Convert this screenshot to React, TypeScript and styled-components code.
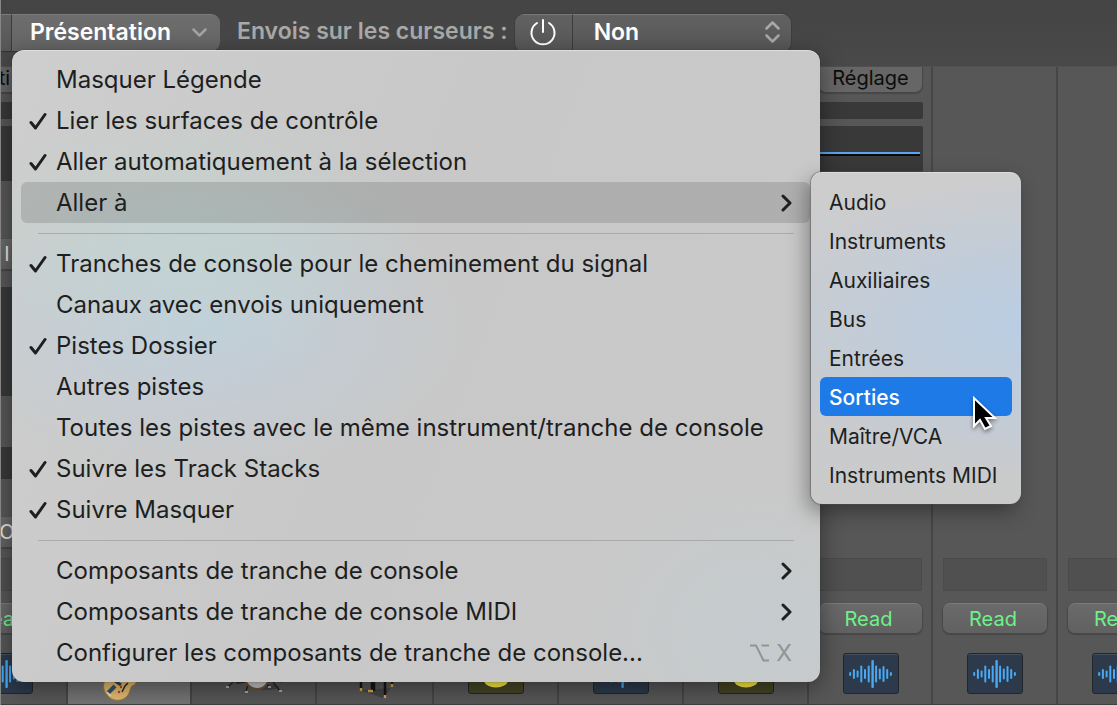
import React from "react";
import styled, { createGlobalStyle, css } from "styled-components";

const Global = createGlobalStyle`
  *, *::before, *::after { box-sizing: border-box; }
  body { margin: 0; background: #575757; font-family: Inter, "Liberation Sans", sans-serif; overflow: hidden; }
  button, select { font: inherit; margin: 0; border: 0; text-align: left; }
`;

const Page = styled.div`
  position: relative;
  display: flex;
  flex-direction: column;
  min-height: 100vh;
  overflow: hidden;
  border-left: 1px solid #868686;
`;

/* ---------- toolbar ---------- */

const Toolbar = styled.header`
  display: flex;
  align-items: flex-start;
  height: 66px;
  padding-top: 14px;
  background: linear-gradient(#444, #494949);
  color: #fff;
  font-size: 23px;
  font-weight: 600;
  line-height: 34px;
`;

const segment = css`
  height: 38px;
  padding: 0 0 2px;
  background: linear-gradient(#616161, #585858);
  border-top: 1px solid #7a7a7a;
  border-bottom: 1px solid #333;
  color: #fff;
`;

const EditSegment = styled.button`
  ${segment}
  width: 11px;
  border-right: 1px solid #3c3c3c;
`;

const ViewButton = styled.button`
  ${segment}
  display: flex;
  align-items: center;
  justify-content: space-between;
  width: 208px;
  padding: 0 13px 2px 18px;
  background: linear-gradient(#6d6d6d, #666);
  border-radius: 0 9px 9px 0;
`;

const SendsLabel = styled.label`
  padding: 0 7px 0 17px;
  color: #a9a9a9;
  white-space: nowrap;
`;

const SendsGroup = styled.div`
  display: flex;
  border-radius: 9px;
  box-shadow: 0 0 0 1px #3d3d3d;
  overflow: hidden;
`;

const PowerButton = styled.button`
  ${segment}
  display: flex;
  align-items: center;
  justify-content: center;
  width: 58px;
  border-right: 1px solid #3c3c3c;
`;

const SelectBox = styled.div`
  ${segment}
  display: flex;
  align-items: center;
  width: 218px;
  padding-right: 11px;
`;

const SendsSelect = styled.select`
  flex: 1;
  height: 34px;
  padding: 0 0 0 21px;
  appearance: none;
  background: transparent;
  color: #fff;
  outline: 0;
`;

/* ---------- mixer ---------- */

const Mixer = styled.main`
  display: flex;
  flex: 1;
  margin-left: -59px;
  border-top: 1px solid #525252;
  border-bottom: 1px solid #404040;
`;

const Strip = styled.section<{ $width?: number; $selected?: boolean }>`
  display: flex;
  flex: none;
  flex-direction: column;
  width: ${(p) => p.$width ?? 125}px;
  padding: 0 9px 0 10px;
  border-right: 2px solid #464646;
  background: ${(p) => (p.$selected ? "#747474" : "#575757")};
`;

const StripTop = styled.div`
  display: flex;
  flex-direction: column;
  height: 491px;
`;

const pill = css`
  width: 100%;
  padding: 0;
  background: linear-gradient(#6a6a6a, #616161);
  box-shadow: 0 1px 1px 1px #474747;
  font-size: 20px;
  text-align: center;
  white-space: nowrap;
`;

const SettingButton = styled.button`
  ${pill}
  height: 25px;
  padding-bottom: 3px;
  border-radius: 0 0 7px 7px;
  background: #666;
  color: #0c0c0c;
  line-height: 22px;
`;

const Well = styled.div<{ $h: number; $gap: number }>`
  flex: none;
  height: ${(p) => p.$h}px;
  margin: ${(p) => p.$gap}px -1px 0;
  border-radius: 2px;
  background: #393939;
`;

const EqCurve = styled.div`
  height: 2px;
  margin: 26px 3px 0 0;
  background: #5da5f2;
  box-shadow: 0 2px 0 #0a0a0a;
`;

const SlotButton = styled.button<{ $gap: number }>`
  ${pill}
  flex: none;
  height: 30px;
  margin-top: ${(p) => p.$gap}px;
  padding-left: 5px;
  color: #e6e6e6;
`;

const GroupSlot = styled.div`
  height: 33px;
  border: 1px solid #4b4b4b;
  background: #505050;
`;

const ReadButton = styled.button`
  ${pill}
  height: 30px;
  margin-top: 12px;
  padding-right: 4px;
  border-top: 1px solid #7b7b7b;
  border-radius: 7px;
  color: #6df289;
  line-height: 28px;
`;

const IconTile = styled.div<{ $tone: "blue" | "yellow" }>`
  display: flex;
  align-items: center;
  justify-content: center;
  align-self: center;
  width: 56px;
  height: 41px;
  margin-top: 20px;
  border: 1px solid #232629;
  border-radius: 3px;
  background: ${(p) => (p.$tone === "blue" ? "#2c3a4b" : "#454526")};
  box-shadow: inset 0 1px 0 #44515f;
`;

const Picture = styled.svg`
  align-self: center;
  flex: none;
  margin-top: 20px;
  overflow: visible;
`;

/* ---------- menus ---------- */

const Menu = styled.div`
  position: absolute;
  top: 50px;
  left: 11px;
  width: 808px;
  padding: 9px 10px 9px 9px;
  border-radius: 12px;
  background:
    radial-gradient(ellipse 230px 130px at 180px 190px, rgba(194, 214, 208, 0.7), transparent),
    radial-gradient(ellipse 260px 150px at 190px 275px, rgba(190, 208, 224, 0.8), transparent),
    radial-gradient(ellipse 160px 140px at 740px 580px, rgba(196, 204, 207, 0.9), transparent),
    linear-gradient(110deg, #cdcecd, #c8c8c8 45%, #c9c9c9);
  box-shadow: 0 0 1px #333, inset 0 1px 0 #dedede, 0 6px 24px rgba(0, 0, 0, 0.42);
  color: #1e1f1f;
  font-size: 24px;
`;

const MenuItem = styled.button<{ $open?: boolean }>`
  display: flex;
  align-items: center;
  width: 100%;
  height: 41px;
  padding: 0 18px 0 8px;
  border-radius: 6px;
  background: ${(p) => (p.$open ? "rgba(0, 0, 0, 0.13)" : "transparent")};
  color: inherit;
  white-space: nowrap;
`;

const CheckSlot = styled.span`
  display: flex;
  width: 27px;
`;

const ItemLabel = styled.span`
  flex: 1;
`;

const Shortcut = styled.kbd`
  display: flex;
  align-items: center;
  gap: 6px;
  color: #929494;
  font: inherit;
  font-size: 23px;
`;

const Separator = styled.hr`
  height: 1px;
  margin: 10px 16px 9px 17px;
  border: 0;
  background: #a9abab;
`;

const Submenu = styled.div`
  position: absolute;
  top: 172px;
  left: 810px;
  width: 210px;
  padding: 10px 9px;
  border-radius: 11px;
  background:
    radial-gradient(ellipse 260px 150px at 215px 155px, #b9cde3, transparent),
    linear-gradient(#cdcdcd, #c9ccd0 50%, #cacaca);
  box-shadow: 0 0 1px 1px rgba(80, 80, 80, 0.5), inset 0 1px 0 #dcdcdc, -4px 8px 20px rgba(0, 0, 0, 0.35);
  color: #1e1f1f;
  font-size: 21px;
`;

const SubmenuItem = styled.button<{ $active?: boolean }>`
  display: block;
  width: 100%;
  height: 39px;
  padding: 1px 9px 0;
  border-radius: 6px;
  background: ${(p) => (p.$active ? "#1e7ae6" : "transparent")};
  color: ${(p) => (p.$active ? "#fff" : "inherit")};
  font-weight: ${(p) => (p.$active ? 500 : 400)};
  white-space: nowrap;
`;

const Pointer = styled.svg`
  position: absolute;
  top: 395px;
  left: 969px;
  filter: drop-shadow(0 2px 2px rgba(0, 0, 0, 0.45));
`;

/* ---------- drawings ---------- */

const Check = () => (
  <svg width="18" height="18" viewBox="0 0 18 18" fill="none" stroke="#1e1f1f" strokeWidth="3" strokeLinecap="round" strokeLinejoin="round" aria-hidden="true">
    <path d="M2 10.5 6.5 16 16 2.5" />
  </svg>
);

const Chevron = () => (
  <svg width="11" height="18" viewBox="0 0 11 18" fill="none" stroke="#1e1f1f" strokeWidth="3" strokeLinecap="round" strokeLinejoin="round" aria-hidden="true">
    <path d="m2 2 7 7-7 7" />
  </svg>
);

const OptionKey = () => (
  <svg width="20" height="18" viewBox="0 0 20 18" fill="none" stroke="#929494" strokeWidth="2" aria-label="Option">
    <path d="M0 1.5h6l7.500 15H19M11.500 1.500H19" />
  </svg>
);

const bars = [4, 10, 7, 17, 10, 17, 28, 17, 11, 16, 10, 4];

const Waveform = () => (
  <svg width="44" height="30" viewBox="0 0 44 30" aria-hidden="true">
    {bars.map((h, i) => (
      <rect key={i} x={i * 3.7 + 0.2} y={15 - h / 2} width={i === 6 ? 2.4 : 2} height={h} rx="1" fill="#49a9f5" />
    ))}
  </svg>
);

const Note = () => (
  <svg width="24" height="32" viewBox="0 0 24 32" aria-hidden="true">
    <ellipse cx="12" cy="22" rx="12" ry="7.500" fill="#fbef45" />
  </svg>
);

const Guitar = () => (
  <Picture width="56" height="48" viewBox="0 0 56 48" aria-hidden="true">
    <path d="M5 24C1 28 0 37 5 42c5 7 16 7 21 0 2-3 2-7 4-9 2-1 4-2 5-6l-6-6Z" fill="#e3bd72" stroke="#a67b35" />
    <path d="m6 40 7-7" stroke="#3b5560" strokeWidth="4" />
    <path d="m13 28 6 4" stroke="#35424a" strokeWidth="3" />
    <path d="m20 39 3-6 3-3" stroke="#2d251c" strokeWidth="1.500" fill="none" />
    <circle cx="19" cy="34" r="1.200" fill="#b3452c" />
    <circle cx="17" cy="39" r="1.200" fill="#b3452c" />
    <path d="m5 39 4 4" stroke="#ece8dc" strokeWidth="1.500" />
  </Picture>
);

const Drums = () => (
  <Picture width="60" height="40" viewBox="0 0 60 40" aria-hidden="true">
    <ellipse cx="42" cy="34" rx="13" ry="3" fill="#444" />
    <path d="M4 34 12 26M16 24l10 8M22 38l4-12M40 26l5 8M46 25l10 13M50 25l8 4M12 30l10-1M40 30l12-3" stroke="#262626" strokeWidth="1.500" />
    <circle cx="33" cy="24" r="12" fill="#c4c4c4" stroke="#6b5539" strokeWidth="2" />
    <path d="M2 34h3M21 39h3M44 34h3M55 38h3" stroke="#c8c8c8" strokeWidth="1.500" />
  </Picture>
);

const Piano = () => (
  <Picture width="44" height="46" viewBox="0 0 44 46" aria-hidden="true">
    <path d="M6 37 30 45 38 35Z" fill="#454545" />
    <path d="M8 20v17M19 20v18M21 20v18M32 20v24M39 20v13" stroke="#151515" strokeWidth="2.500" />
    <path d="M8 35v3M32 42v3M39 31v3M15 38h5" stroke="#d8a54c" strokeWidth="2.500" />
  </Picture>
);

/* ---------- data ---------- */

type Entry = { label: string; checked?: boolean; submenu?: boolean; open?: boolean; shortcut?: string };

const groups: Entry[][] = [
  [
    { label: "Masquer Légende" },
    { label: "Lier les surfaces de contrôle", checked: true },
    { label: "Aller automatiquement à la sélection", checked: true },
    { label: "Aller à", submenu: true, open: true },
  ],
  [
    { label: "Tranches de console pour le cheminement du signal", checked: true },
    { label: "Canaux avec envois uniquement" },
    { label: "Pistes Dossier", checked: true },
    { label: "Autres pistes" },
    { label: "Toutes les pistes avec le même instrument/tranche de console" },
    { label: "Suivre les Track Stacks", checked: true },
    { label: "Suivre Masquer", checked: true },
  ],
  [
    { label: "Composants de tranche de console", submenu: true },
    { label: "Composants de tranche de console MIDI", submenu: true },
    { label: "Configurer les composants de tranche de console...", shortcut: "X" },
  ],
];

const destinations = ["Audio", "Instruments", "Auxiliaires", "Bus", "Entrées", "Sorties", "Maître/VCA", "Instruments MIDI"];

type Channel = {
  width?: number;
  selected?: boolean;
  picture: React.ReactNode;
  setting?: string;
  slots?: string[];
  automation?: string;
};

const wave = <IconTile $tone="blue"><Waveform /></IconTile>;
const note = <IconTile $tone="yellow"><Note /></IconTile>;

const channels: Channel[] = [
  { width: 126, picture: wave, setting: "ti", slots: ["I", "O"], automation: "Read" },
  { width: 124, selected: true, picture: <Guitar /> },
  { picture: <Drums /> },
  { width: 117, picture: <Piano /> },
  { picture: note },
  { picture: wave },
  { picture: note },
  { width: 124, picture: wave, setting: "Réglage", automation: "Read" },
  { picture: wave, automation: "Read" },
  { picture: wave, automation: "Read" },
];

const ChannelStrip = ({ channel }: { channel: Channel }) => (
  <Strip $width={channel.width} $selected={channel.selected}>
    <StripTop>
      {channel.setting && (
        <>
          <SettingButton>{channel.setting}</SettingButton>
          <Well $h={17} $gap={10} />
          <Well $h={55} $gap={7}>
            {!channel.slots && <EqCurve />}
          </Well>
        </>
      )}
      {channel.slots && (
        <>
          <SlotButton $gap={58}>{channel.slots[0]}</SlotButton>
          <Well $h={109} $gap={18} />
          <Well $h={32} $gap={51} />
          <SlotButton $gap={38}>{channel.slots[1]}</SlotButton>
        </>
      )}
    </StripTop>
    <GroupSlot />
    <ReadButton aria-label="Automation">{channel.automation}</ReadButton>
    {channel.picture}
  </Strip>
);

export default function App() {
  return (
    <Page>
      <Global />
      <Toolbar>
        <EditSegment aria-label="Options" />
        <ViewButton aria-haspopup="menu" aria-expanded="true">
          Présentation
          <svg width="15" height="9" viewBox="0 0 15 9" fill="none" stroke="#a3a3a3" strokeWidth="2.500" strokeLinecap="round" strokeLinejoin="round">
            <path d="m1.500 1.500 6 6 6-6" />
          </svg>
        </ViewButton>
        <SendsLabel htmlFor="sends">Envois sur les curseurs :</SendsLabel>
        <SendsGroup>
          <PowerButton aria-label="Activer">
            <svg width="28" height="28" viewBox="0 0 28 28" fill="none" stroke="#fff" strokeWidth="2" strokeLinecap="round">
              <path d="M14 2v12M8 5a11.500 11.500 0 1 0 12 0" />
            </svg>
          </PowerButton>
          <SelectBox>
            <SendsSelect id="sends" defaultValue="Non">
              <option>Non</option>
            </SendsSelect>
            <svg width="15" height="22" viewBox="0 0 15 22" fill="none" stroke="#a9a9a9" strokeWidth="2.500" strokeLinecap="round" strokeLinejoin="round" aria-hidden="true">
              <path d="m1.500 7.500 6-6 6 6M1.500 14.500l6 6 6-6" />
            </svg>
          </SelectBox>
        </SendsGroup>
      </Toolbar>

      <Mixer>
        {channels.map((channel, i) => (
          <ChannelStrip key={i} channel={channel} />
        ))}
      </Mixer>

      <Menu role="menu" aria-label="Présentation">
        {groups.map((group, g) => (
          <React.Fragment key={g}>
            {g > 0 && <Separator />}
            {group.map((item) => (
              <MenuItem key={item.label} role="menuitem" $open={item.open}>
                <CheckSlot>{item.checked && <Check />}</CheckSlot>
                <ItemLabel>{item.label}</ItemLabel>
                {item.submenu && <Chevron />}
                {item.shortcut && (
                  <Shortcut>
                    <OptionKey />
                    {item.shortcut}
                  </Shortcut>
                )}
              </MenuItem>
            ))}
          </React.Fragment>
        ))}
      </Menu>

      <Submenu role="menu" aria-label="Aller à">
        {destinations.map((name) => (
          <SubmenuItem key={name} role="menuitem" $active={name === "Sorties"}>
            {name}
          </SubmenuItem>
        ))}
      </Submenu>

      <Pointer width="28" height="38" viewBox="0 0 28 38" aria-hidden="true">
        <path d="M4 3v28l6-6 5 9 6-3-5-8h9Z" fill="#000" stroke="#fff" strokeWidth="2" />
      </Pointer>
    </Page>
  );
}
